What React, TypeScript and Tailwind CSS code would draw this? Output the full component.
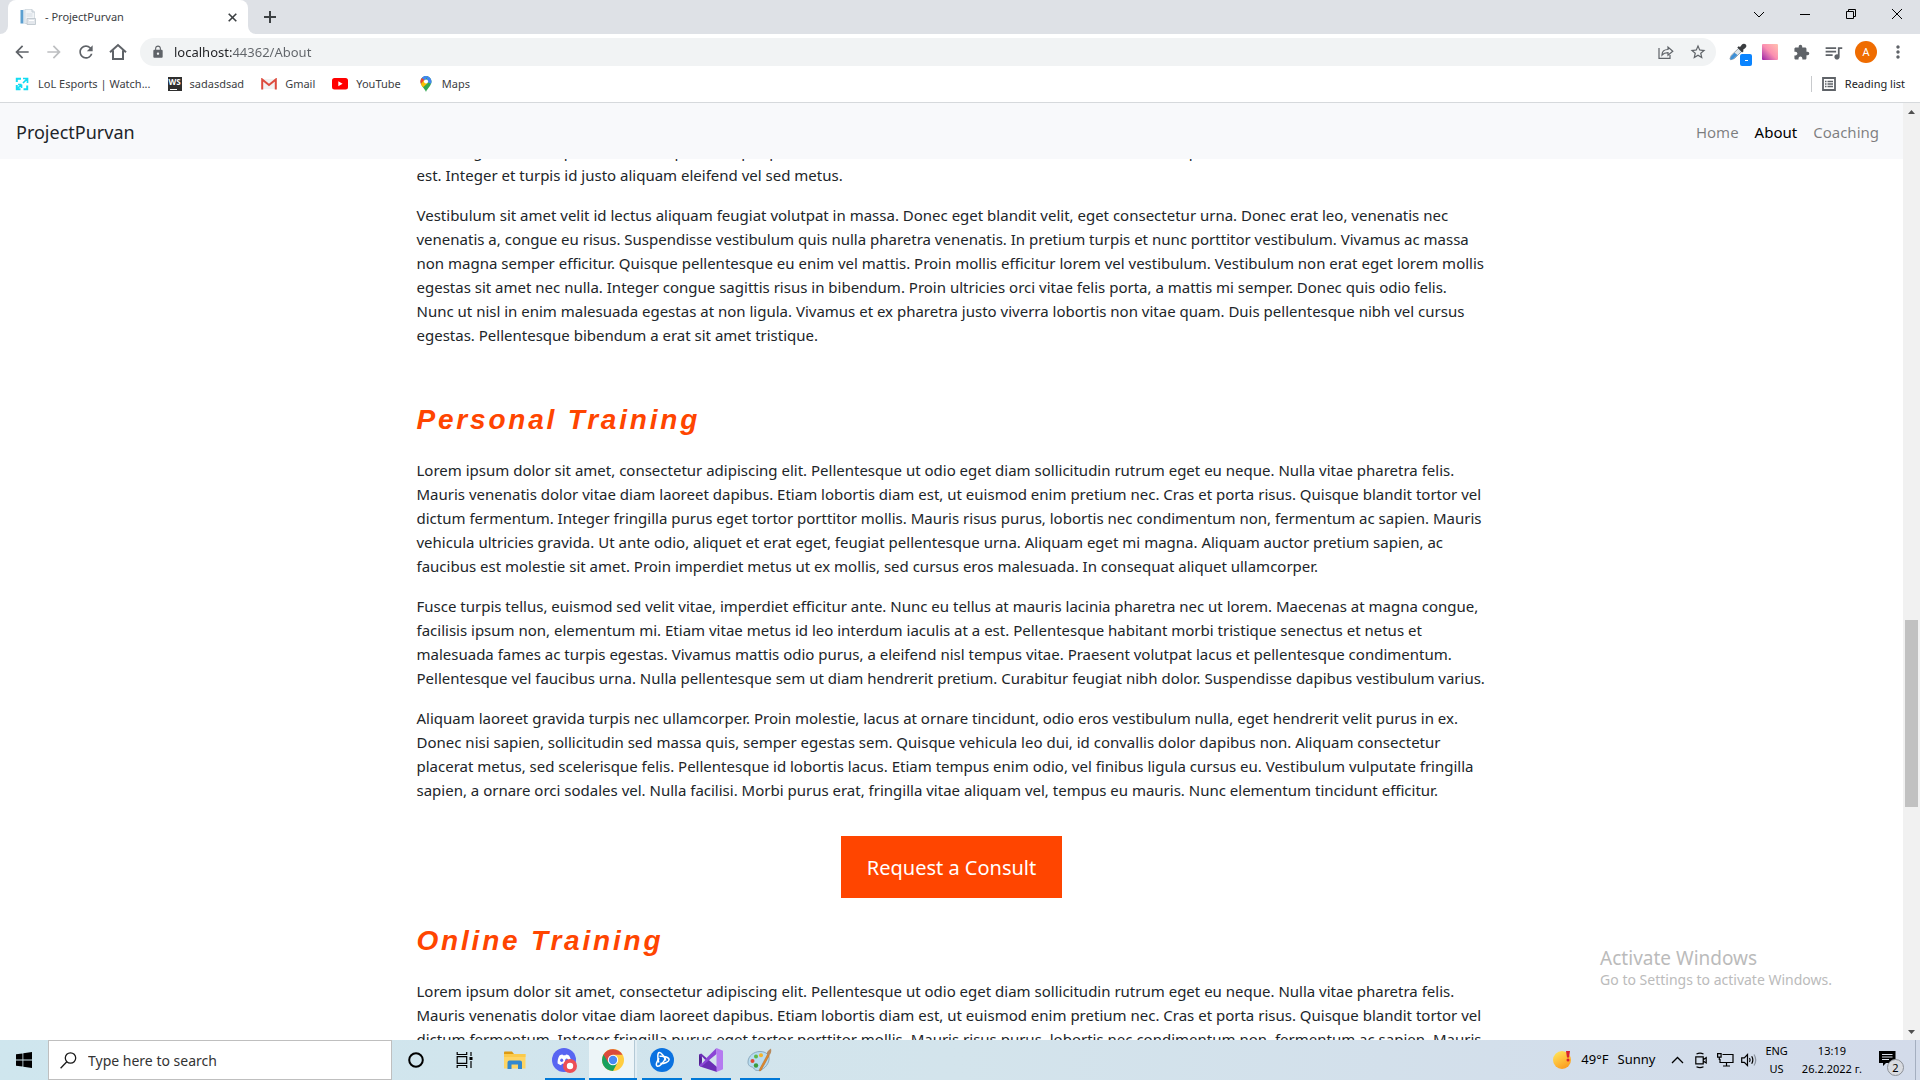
import type { ReactNode } from "react";
import {
  MdArrowBack,
  MdArrowForward,
  MdRefresh,
  MdLock,
  MdExtension,
  MdQueueMusic,
  MdMoreVert,
  MdStarOutline,
} from "react-icons/md";

type Line = string;

const introLines: Line[] = [
  "Sed integer et id tempus at lacus suspendisse per porta vel nisl in enim malesuada at non ante vitae mattis in pretium dolor nunc vitae urna blandit",
  "est. Integer et turpis id justo aliquam eleifend vel sed metus.",
];

const vestibulumLines: Line[] = [
  "Vestibulum sit amet velit id lectus aliquam feugiat volutpat in massa. Donec eget blandit velit, eget consectetur urna. Donec erat leo, venenatis nec",
  "venenatis a, congue eu risus. Suspendisse vestibulum quis nulla pharetra venenatis. In pretium turpis et nunc porttitor vestibulum. Vivamus ac massa",
  "non magna semper efficitur. Quisque pellentesque eu enim vel mattis. Proin mollis efficitur lorem vel vestibulum. Vestibulum non erat eget lorem mollis",
  "egestas sit amet nec nulla. Integer congue sagittis risus in bibendum. Proin ultricies orci vitae felis porta, a mattis mi semper. Donec quis odio felis.",
  "Nunc ut nisl in enim malesuada egestas at non ligula. Vivamus et ex pharetra justo viverra lobortis non vitae quam. Duis pellentesque nibh vel cursus",
  "egestas. Pellentesque bibendum a erat sit amet tristique.",
];

const loremLines: Line[] = [
  "Lorem ipsum dolor sit amet, consectetur adipiscing elit. Pellentesque ut odio eget diam sollicitudin rutrum eget eu neque. Nulla vitae pharetra felis.",
  "Mauris venenatis dolor vitae diam laoreet dapibus. Etiam lobortis diam est, ut euismod enim pretium nec. Cras et porta risus. Quisque blandit tortor vel",
  "dictum fermentum. Integer fringilla purus eget tortor porttitor mollis. Mauris risus purus, lobortis nec condimentum non, fermentum ac sapien. Mauris",
  "vehicula ultricies gravida. Ut ante odio, aliquet et erat eget, feugiat pellentesque urna. Aliquam eget mi magna. Aliquam auctor pretium sapien, ac",
  "faucibus est molestie sit amet. Proin imperdiet metus ut ex mollis, sed cursus eros malesuada. In consequat aliquet ullamcorper.",
];

const fusceLines: Line[] = [
  "Fusce turpis tellus, euismod sed velit vitae, imperdiet efficitur ante. Nunc eu tellus at mauris lacinia pharetra nec ut lorem. Maecenas at magna congue,",
  "facilisis ipsum non, elementum mi. Etiam vitae metus id leo interdum iaculis at a est. Pellentesque habitant morbi tristique senectus et netus et",
  "malesuada fames ac turpis egestas. Vivamus mattis odio purus, a eleifend nisl tempus vitae. Praesent volutpat lacus et pellentesque condimentum.",
  "Pellentesque vel faucibus urna. Nulla pellentesque sem ut diam hendrerit pretium. Curabitur feugiat nibh dolor. Suspendisse dapibus vestibulum varius.",
];

const aliquamLines: Line[] = [
  "Aliquam laoreet gravida turpis nec ullamcorper. Proin molestie, lacus at ornare tincidunt, odio eros vestibulum nulla, eget hendrerit velit purus in ex.",
  "Donec nisi sapien, sollicitudin sed massa quis, semper egestas sem. Quisque vehicula leo dui, id convallis dolor dapibus non. Aliquam consectetur",
  "placerat metus, sed scelerisque felis. Pellentesque id lobortis lacus. Etiam tempus enim odio, vel finibus ligula cursus eu. Vestibulum vulputate fringilla",
  "sapien, a ornare orci sodales vel. Nulla facilisi. Morbi purus erat, fringilla vitae aliquam vel, tempus eu mauris. Nunc elementum tincidunt efficitur.",
];

function Paragraph({ lines }: { lines: Line[] }) {
  return (
    <p className="mb-4 whitespace-nowrap text-[15px] leading-6">
      {lines.map((line) => (
        <span key={line} className="block">
          {line}
        </span>
      ))}
    </p>
  );
}

function SectionTitle({ children }: { children: ReactNode }) {
  return (
    <h3 className="mb-[21px] font-['Liberation_Sans',sans-serif] text-[28px] leading-[34px] font-bold tracking-widest text-[#ff4500] italic">
      {children}
    </h3>
  );
}

function IconButton({
  label,
  className,
  children,
}: {
  label: string;
  className: string;
  children: ReactNode;
}) {
  return (
    <button type="button" aria-label={label} className={`flex shrink-0 items-center justify-center ${className}`}>
      {children}
    </button>
  );
}

function TabStrip() {
  return (
    <div className="flex h-[34px] shrink-0 bg-[#dee1e6]">
      <div className="w-2 bg-white">
        <div className="h-full w-2 rounded-br-lg bg-[#dee1e6]" />
      </div>
      <div className="flex h-[34px] w-60 items-center rounded-t-lg bg-white pr-2 pl-3">
        <svg width="16" height="16" viewBox="0 0 16 16" className="mr-[9px] shrink-0">
          <rect x="0.5" y="1" width="3" height="13.5" fill="#5b9fd0" />
          <rect x="3.5" y="0.5" width="1" height="14.5" fill="#c9dcec" />
          <path d="M5 .5h7l2.500 2.500V14.500H5z" fill="#f1f4f7" stroke="#cdd5dc" strokeWidth=".8" />
          <path d="M12 .5V3h2.500" fill="none" stroke="#b7c2cc" strokeWidth=".8" />
          <path d="M6.500 5h6M6.500 7h6" stroke="#d5dce3" />
          <path d="M7 9.500h8.500V15.500H7z" fill="#e3e7ec" stroke="#b9c1c9" strokeWidth=".8" />
          <path d="M9 11.500h5" stroke="#fff" />
        </svg>
        <span className="flex-1 text-[11px] text-[#3c4043]">- ProjectPurvan</span>
        <IconButton label="Close tab" className="size-4 text-[#3c4043]">
          <svg width="9" height="9" viewBox="0 0 9 9" stroke="currentColor" strokeWidth="1.600">
            <path d="M.7.7l7.600 7.600M8.300.7L.7 8.300" />
          </svg>
        </IconButton>
      </div>
      <div className="w-2 bg-white">
        <div className="h-full w-2 rounded-bl-lg bg-[#dee1e6]" />
      </div>
      <IconButton label="New tab" className="ml-1 w-5 text-[#3c4043]">
        <svg width="12" height="12" viewBox="0 0 12 12" stroke="currentColor" strokeWidth="2">
          <path d="M6 0v12M0 6h12" />
        </svg>
      </IconButton>
      <div className="ml-auto flex h-7 text-black">
        <IconButton label="Search tabs" className="w-[46px]">
          <svg width="12" height="7" viewBox="0 0 12 7" fill="none" stroke="currentColor">
            <path d="M1 1l5 5 5-5" />
          </svg>
        </IconButton>
        <IconButton label="Minimize" className="w-[46px]">
          <svg width="10" height="10" viewBox="0 0 10 10" fill="none" stroke="currentColor">
            <path d="M0 5.500h10" />
          </svg>
        </IconButton>
        <IconButton label="Restore" className="w-[46px]">
          <svg width="10" height="10" viewBox="0 0 10 10" fill="none" stroke="currentColor">
            <path d="M.5 2.500h7v7h-7zM2.500 2.500v-2h7v7h-2" />
          </svg>
        </IconButton>
        <IconButton label="Close window" className="w-[46px]">
          <svg width="10" height="10" viewBox="0 0 10 10" fill="none" stroke="currentColor">
            <path d="M0 0l10 10M10 0L0 10" />
          </svg>
        </IconButton>
      </div>
    </div>
  );
}

function Toolbar() {
  return (
    <div className="flex h-9 shrink-0 items-center bg-white pl-2 text-[#5f6368]">
      <IconButton label="Back" className="w-7">
        <MdArrowBack size={20} />
      </IconButton>
      <IconButton label="Forward" className="ml-1 w-7 text-[#bdbfc1]">
        <MdArrowForward size={20} />
      </IconButton>
      <IconButton label="Reload" className="ml-1 w-7">
        <MdRefresh size={20} />
      </IconButton>
      <IconButton label="Home page" className="ml-1 w-7">
        <svg width="18" height="18" viewBox="0 0 18 18" fill="none" stroke="currentColor" strokeWidth="2">
          <path d="M1 9.300L9 2l8 7.300M4 7.500V16h10V7.500" />
        </svg>
      </IconButton>
      <div className="ml-2 flex h-7 flex-1 items-center rounded-full bg-[#f1f3f4] pr-2 pl-[11px]">
        <MdLock size={14} className="shrink-0" />
        <input
          aria-label="Address bar"
          defaultValue="localhost:44362/About"
          className="ml-[9px] min-w-0 flex-1 bg-linear-to-r from-[#202124] from-[58px] to-[#5f6368] to-[58px] bg-clip-text pt-px text-[13px] text-transparent outline-none"
        />
        <IconButton label="Share this page" className="w-5">
          <svg width="16" height="16" viewBox="0 0 16 16" fill="none" stroke="currentColor" strokeWidth="1.200">
            <path d="M1 4v10.300h11V11" />
            <path d="M4 11c0-4 2.500-5.500 6-5.500V3l4.800 4.200L10 11.300V8.600C7.300 8.600 5.500 9.200 4 11z" />
          </svg>
        </IconButton>
        <IconButton label="Bookmark this page" className="ml-3 w-5">
          <MdStarOutline size={18} />
        </IconButton>
      </div>
      <IconButton label="Color picker" className="relative ml-2 h-7 w-7">
        <svg width="18" height="18" viewBox="0 0 18 18">
          <path d="M10 5l3 3-7.500 7.500-3.800 1.300-.8-.8 1.300-3.600z" fill="#dfe6ea" stroke="#8a9299" strokeWidth=".8" />
          <path d="M5.500 9.800l3 2.300-4 3.600-2.800 1-.6-.6 1.200-3z" fill="#3d8fd6" />
          <path d="M8.300 4.600l1.400-1.300 1.300.6 2-2.400c1-1.200 3.200-1 4 .2s.3 2.500-.7 3.300l-2.200 1.800.4 1.400-1.400 1.300z" fill="#3a3d40" />
        </svg>
        <span className="absolute right-0 bottom-0 flex size-3 items-center justify-center rounded-xs bg-[#0a84ff]">
          <span className="h-px w-[3px] bg-white" />
        </span>
      </IconButton>
      <IconButton label="Gradient extension" className="ml-1 w-7">
        <span className="size-4 rounded-[1px] bg-linear-to-tr from-[#9d12a5] via-[#fb8fb0] to-[#ffc2b0]" />
      </IconButton>
      <IconButton label="Extensions" className="ml-[3px] w-7">
        <MdExtension size={17} />
      </IconButton>
      <IconButton label="Media controls" className="ml-1 w-7">
        <MdQueueMusic size={21} />
      </IconButton>
      <IconButton label="Profile" className="ml-2 size-[22px] rounded-full bg-[#ef6c00] text-[11px] text-white">
        A
      </IconButton>
      <IconButton label="Chrome menu" className="mr-2 ml-[7px] w-7">
        <MdMoreVert size={20} />
      </IconButton>
    </div>
  );
}

function Bookmark({ icon, label }: { icon: ReactNode; label: string }) {
  return (
    <a href="#" className="flex shrink-0 items-center gap-2">
      {icon}
      <span>{label}</span>
    </a>
  );
}

function BookmarksBar() {
  return (
    <div className="flex h-[33px] shrink-0 items-center gap-[17px] border-b border-[#d6d9dc] bg-white pr-[15px] pb-1 pl-[14px] text-[11px] text-[#3c4043]">
      <Bookmark
        label="LoL Esports | Watch..."
        icon={
          <svg width="16" height="16" viewBox="0 0 16 16" fill="none" stroke="#12dcf2">
            <path d="M2.800 6V2.800H7M9.500 13.200H13.200V9.500M2.800 9v4.200H6.500" strokeWidth="2" />
            <path d="M9 7l4.500-4.500M9 2.500h4.500V7M7 9l-3.500 3.500M7.500 8.500H4M7.500 8.500V12" strokeWidth="1.700" />
          </svg>
        }
      />
      <Bookmark
        label="sadasdsad"
        icon={
          <span className="flex size-[14px] flex-col justify-between bg-[#2f2f2f] pb-px pl-px text-white">
            <span className="text-[8px] leading-[9px] font-bold">WS</span>
            <span className="ml-px h-px w-[7px] bg-white" />
          </span>
        }
      />
      <Bookmark
        label="Gmail"
        icon={
          <svg width="16" height="12" viewBox="0 0 16 12">
            <path d="M1 1h14v10H1z" fill="#f2f2f2" />
            <path d="M1.200 11.500V1.500L8 7l6.800-5.500v10" fill="none" stroke="#dd4b3e" strokeWidth="2" />
          </svg>
        }
      />
      <Bookmark
        label="YouTube"
        icon={
          <svg width="16" height="12" viewBox="0 0 16 12">
            <rect width="16" height="11.500" rx="2.500" fill="#f00" />
            <path d="M6.300 3.300v5L10.600 5.800z" fill="#fff" />
          </svg>
        }
      />
      <Bookmark
        label="Maps"
        icon={
          <svg width="16" height="16" viewBox="0 0 16 16">
            <path d="M8 16c-.8-3-5.500-6-5.500-10.500C2.500 2.500 5 0 8 0s5.500 2.500 5.500 5.500C13.500 10 8.800 13 8 16z" fill="#34a853" />
            <path d="M8 0c3 0 5.500 2.500 5.500 5.500 0 .8-.2 1.600-.5 2.300L8 5.500 9.500 0z" fill="#4285f4" />
            <path d="M3.800 2C5 .6 6.500 0 8 0c.6 0 1.300.1 1.900.3L6 5z" fill="#4285f4" />
            <path d="M3.800 1.900L6.500 4 3 8.200C2.200 6.200 2.100 3.900 3.800 1.900z" fill="#ea4335" />
            <path d="M6.300 6.800L9.800 7 5 11.200C4.200 10.200 3.300 9 2.900 7.900L6 4z" fill="#fbbc04" />
            <circle cx="8" cy="5.500" r="2.100" fill="#fff" />
          </svg>
        }
      />
      <button type="button" className="ml-auto flex items-center gap-[9px] text-[#202124]">
        <span className="mr-px h-4 w-px bg-[#c8cacd]" />
        <svg width="14" height="14" viewBox="0 0 14 14" fill="none" stroke="#5f6368">
          <path d="M1 1h12v12H1z" strokeWidth="1.800" />
          <path d="M3 4.500h1.500M3 7h1.500M3 9.500h1.500M5.500 4.500H11M5.500 7H11M5.500 9.500H11" strokeWidth="1.300" />
        </svg>
        Reading list
      </button>
    </div>
  );
}

function SiteNav() {
  return (
    <nav className="relative z-10 flex h-14 shrink-0 items-center bg-[#f8f9fb] pt-px pr-6 pl-4">
      <a href="#" className="text-[18px] leading-7 text-[#212529]">
        ProjectPurvan
      </a>
      <div className="ml-auto flex gap-4 text-[15px] leading-6">
        <a href="#" className="text-black/50">
          Home
        </a>
        <a href="#" className="text-black">
          About
        </a>
        <a href="#" className="text-black/50">
          Coaching
        </a>
      </div>
    </nav>
  );
}

function Scrollbar() {
  return (
    <div className="flex w-[17px] shrink-0 flex-col bg-[#f1f1f1] px-[2px]">
      <IconButton label="Scroll up" className="h-[17px] text-[#505050]">
        <svg width="7" height="4" viewBox="0 0 7 4" fill="currentColor">
          <path d="M3.500 0L7 4H0z" />
        </svg>
      </IconButton>
      <div className="flex-[500]" />
      <div className="flex-[187] bg-[#c1c1c1]" />
      <div className="flex-[216]" />
      <IconButton label="Scroll down" className="h-[17px] text-[#505050]">
        <svg width="7" height="4" viewBox="0 0 7 4" fill="currentColor">
          <path d="M3.500 4L0 0h7z" />
        </svg>
      </IconButton>
    </div>
  );
}

function Page() {
  return (
    <div className="relative flex min-h-0 flex-1">
      <div className="flex min-w-0 flex-1 flex-col overflow-hidden bg-white">
        <SiteNav />
        <main className="min-h-0 flex-1">
          <article className="mx-auto -mt-5 max-w-[1070px] text-[#212529]">
            <Paragraph lines={introLines} />
            <Paragraph lines={vestibulumLines} />
            <section className="pt-10">
              <SectionTitle>Personal Training</SectionTitle>
              <Paragraph lines={loremLines} />
              <Paragraph lines={fusceLines} />
              <Paragraph lines={aliquamLines} />
              <div className="flex justify-center pt-[18px] pb-[26px]">
                <button type="button" className="bg-[#ff4500] px-[26px] pt-[17px] pb-[15px] text-[20px] leading-[30px] text-white">
                  Request a Consult
                </button>
              </div>
            </section>
            <section>
              <SectionTitle>Online Training</SectionTitle>
              <Paragraph lines={loremLines.slice(0, 3)} />
            </section>
          </article>
        </main>
      </div>
      <Scrollbar />
      <aside className="pointer-events-none absolute right-[88px] bottom-[50px] z-20 text-[#bbb]">
        <p className="text-[19px] leading-6">Activate Windows</p>
        <p className="text-[14px] leading-5">Go to Settings to activate Windows.</p>
      </aside>
    </div>
  );
}

function TaskbarApp({ label, running, children }: { label: string; running?: boolean; children: ReactNode }) {
  return (
    <button type="button" aria-label={label} className="flex w-[49px] flex-col items-center">
      <span className="flex flex-1 items-center">{children}</span>
      {running && <span className="-mt-[2px] h-[2px] w-10 bg-[#0078d7]" />}
    </button>
  );
}

function Taskbar() {
  return (
    <footer className="flex h-10 shrink-0 bg-linear-to-r from-[#cfe6ee] via-[#d3e4ec] to-[#d3dbea] text-black">
      <IconButton label="Start" className="w-12">
        <svg width="16" height="16" viewBox="0 0 16 16">
          <path d="M0 2.300L6.500 1.400v6.200H0zM7.300 1.300L16 0v7.600H7.300zM0 8.400h6.500v6.200L0 13.700zM7.300 8.400H16V16l-8.700-1.300z" />
        </svg>
      </IconButton>
      <label className="flex w-[344px] items-center border border-[#bfbfbf] bg-white pl-[11px]">
        <svg width="17" height="17" viewBox="0 0 17 17" fill="none" stroke="#1a1a1a" strokeWidth="1.300">
          <circle cx="10.500" cy="6" r="5.200" />
          <path d="M6.800 9.800L.6 16.200" />
        </svg>
        <input
          aria-label="Search"
          placeholder="Type here to search"
          className="ml-[11px] min-w-0 flex-1 text-[14px] outline-none placeholder:text-[#333]"
        />
      </label>
      <IconButton label="Cortana" className="w-12">
        <svg width="16" height="16" viewBox="0 0 16 16" fill="none" stroke="#000" strokeWidth="2">
          <circle cx="8" cy="8" r="6.800" />
        </svg>
      </IconButton>
      <IconButton label="Task view" className="w-[49px]">
        <svg width="17" height="16" viewBox="0 0 17 16" fill="none" stroke="#000" strokeWidth="1.200">
          <path d="M1.200 0v2.500h9.500V0M1.200 16v-2.500h9.500V16M1.200 4.600h9.500v6.800H1.200zM15 0v4M15 9v7" />
          <path d="M13.500 5h3v3h-3z" fill="#000" stroke="none" />
        </svg>
      </IconButton>
      <div className="ml-px flex">
        <TaskbarApp label="File Explorer">
          <svg width="22" height="19" viewBox="0 0 22 19">
            <path d="M0 1.200Q0 .5.800.5H8l2 2.500H0z" fill="#dd9a12" />
            <path d="M0 3h21.500v14.500H0z" fill="#ffd564" />
            <path d="M0 3h21.500v3H0z" fill="#fbca4b" />
            <path d="M3.500 18V11.500Q3.500 9.500 5.500 9.500h10.500q2 0 2 2V18h-4v-4.500H7.500V18z" fill="#3288d0" />
          </svg>
        </TaskbarApp>
      </div>
      <div className="ml-px flex">
        <TaskbarApp label="Discord" running>
          <svg width="25" height="25" viewBox="0 0 25 25">
            <circle cx="12" cy="12" r="12" fill="#5865f2" />
            <path d="M7.500 7.500c1-.7 2-1 3-1.100l.5.900h2.500l.5-.9c1 .1 2.100.4 3 1.100 1.500 2.300 2.400 5 2.200 8-1.200.9-2.300 1.400-3.500 1.700l-.9-1.400H10l-.9 1.400c-1.200-.3-2.400-.9-3.500-1.700-.2-3 .5-5.600 1.900-8z" fill="#fff" />
            <ellipse cx="9.700" cy="12.300" rx="1.500" ry="1.700" fill="#5865f2" />
            <ellipse cx="14.700" cy="12.300" rx="1.500" ry="1.700" fill="#5865f2" />
            <circle cx="18" cy="18" r="7" fill="#ed4f55" />
            <circle cx="18" cy="18" r="3.200" fill="#fff" />
          </svg>
        </TaskbarApp>
      </div>
      <button type="button" aria-label="Google Chrome" className="flex w-12 border-b-2 border-[#0078d7]">
        <span className="flex h-full w-[45px] items-center justify-center bg-[#edf5f8] pt-[2px] pl-[2px]">
          <svg width="22" height="22" viewBox="0 0 22 22">
            <circle cx="11" cy="11" r="11" fill="#ffcd40" />
            <path d="M11 11L1.500 5.500A11 11 0 0 0 11 22L15.500 13.500z" fill="#18a05e" />
            <path d="M1.500 5.500A11 11 0 0 1 20.500 5.800H11L6.200 13.500z" fill="#da4b3c" />
            <circle cx="11" cy="11" r="5.200" fill="#fff" />
            <circle cx="11" cy="11" r="4.200" fill="#4a8af4" />
          </svg>
        </span>
        <span className="h-full w-px bg-[#b3c9d6]" />
        <span className="h-full flex-1 bg-[#e2eef4]" />
      </button>
      <TaskbarApp label="Battle.net" running>
        <svg width="24" height="24" viewBox="0 0 24 24" fill="none" stroke="#fff" strokeWidth="1.500">
          <circle cx="12" cy="12" r="12" fill="#0b72e0" stroke="none" />
          <path d="M8.800 14.500C7.200 9.500 7.600 4.800 9.300 4.600c2-.2 5 3.800 6.600 7.900" />
          <path d="M9.500 8.300c5-.6 9.800 1.400 9.600 3.500-.2 2-4.300 3.800-8.800 3.800" />
          <path d="M15.800 9.500c-2 4.800-6.300 9.500-8.500 8.700-1.900-.8-.8-4.500 1.800-8" />
        </svg>
      </TaskbarApp>
      <TaskbarApp label="Visual Studio" running>
        <svg width="24" height="24" viewBox="0 0 24 24">
          <path d="M0 6.500L2.200 5.500 18 19v5L1.800 18.800 0 17.500z" fill="#6a2db5" />
          <path d="M0 17.500V6.500l3.500 5.500z" fill="#52218f" />
          <path d="M2.200 18.800L0 17.500 17.500 0v6z" fill="#8b45d6" />
          <path d="M3 8.500v7L6.300 12z" fill="#d3e4ec" />
          <path d="M17.500 7v10L11 12z" fill="#d3e4ec" />
          <path d="M17.500 0L24 2.800v18.400L17.500 24z" fill="#b57af0" />
        </svg>
      </TaskbarApp>
      <TaskbarApp label="Paint" running>
        <svg width="25" height="24" viewBox="0 0 25 24">
          <path d="M1 14C1 8 7 3.500 13 3.500S23 7 22 12s-5.500 10.500-11.500 10.500c-3.500 0-3-2.500-5-3.300S1 18 1 14z" fill="#b8dcf0" stroke="#7c9bb0" strokeWidth=".8" />
          <circle cx="5.500" cy="13" r="2" fill="#e34b35" />
          <circle cx="9" cy="8.500" r="2" fill="#5cb84a" />
          <circle cx="14" cy="7.300" r="2" fill="#f5b32b" />
          <circle cx="9" cy="17.500" r="2.200" fill="#3a9c3e" />
          <path d="M20.500 6.500l1.800 1L14 22.500l-1.500.5.200-2z" fill="#e08a2e" stroke="#b5641a" strokeWidth=".5" />
          <path d="M20 6.500c-.5-3 1.500-4 4-6 .8 3-.1 5.500-2 7z" fill="#b98a5e" />
        </svg>
      </TaskbarApp>
      <div className="ml-auto flex items-center">
        <button type="button" className="flex items-center text-[13px]">
          <svg width="20" height="20" viewBox="0 0 20 20" className="mr-[9px]">
            <defs>
              <linearGradient id="sun" x1="0.200" y1="0.100" x2="0.700" y2="1">
                <stop offset="0" stopColor="#ffdf55" />
                <stop offset="1" stopColor="#fb9a1e" />
              </linearGradient>
            </defs>
            <circle cx="10" cy="10" r="9" fill="url(#sun)" />
            <path d="M14 1h4l-1 6.500h-2z" fill="#d8232f" />
            <circle cx="16" cy="10" r="1.500" fill="#d8232f" />
          </svg>
          <span className="mr-[9px]">49°F</span>
          <span>Sunny</span>
        </button>
        <IconButton label="Show hidden icons" className="ml-[10px] w-6">
          <svg width="13" height="8" viewBox="0 0 13 8" fill="none" stroke="#000" strokeWidth="1.300">
            <path d="M1 7l5.500-5.500L12 7" />
          </svg>
        </IconButton>
        <IconButton label="Meet now" className="w-6">
          <svg width="12" height="17" viewBox="0 0 12 17" fill="none" stroke="#000" strokeWidth="1.200">
            <path d="M.8 4.800h7.400v7H.8zM8.500 7.500l2.700-1.800v5.200L8.500 9.200M1.500 2Q5 .2 8.500 2M1.500 14.800q3.500 1.800 7 0" />
          </svg>
        </IconButton>
        <IconButton label="Network" className="w-6">
          <svg width="17" height="14" viewBox="0 0 17 14" fill="none" stroke="#000" strokeWidth="1.200">
            <path d="M5.500 1.500h10.500v8H3V6M9.500 9.500v3.500M6 13h7" />
            <path d="M.6.6h3.500v3.500H.6zM2.300 4.100v3" />
          </svg>
        </IconButton>
        <IconButton label="Volume" className="w-6">
          <svg width="16" height="14" viewBox="0 0 16 14" fill="none" stroke="#000" strokeWidth="1.200">
            <path d="M.7 4.800h2.600L6.500 1.500v11L3.300 9.300H.7z" />
            <path d="M8.500 5Q9.800 7 8.500 9M10.700 3.300q2.300 3.700 0 7.400" />
            <path d="M13 1.500q3.500 5.500 0 11" stroke="#8a929e" />
          </svg>
        </IconButton>
        <button type="button" className="ml-1 text-center text-[11px] leading-[18px]">
          <span className="block">ENG</span>
          <span className="block">US</span>
        </button>
        <button type="button" className="ml-[14px] text-center text-[11px] leading-[18px]">
          <span className="block">13:19</span>
          <span className="block">26.2.2022 г.</span>
        </button>
        <IconButton label="Notifications" className="relative ml-[11px] h-10 w-[42px] pr-[14px]">
          <svg width="17" height="16" viewBox="0 0 17 16" className="-mt-[2px]">
            <path d="M0 0h16.500v12H7l-3 3v-3H0z" />
            <path d="M3 3.500h10.500M3 6h10.500M3 8.500h7" stroke="#dbe1ec" strokeWidth="1.100" />
          </svg>
          <span className="absolute right-[11px] bottom-1 flex size-[17px] items-center justify-center rounded-full border border-[#8b8f96] bg-[#d9dbe0] text-[11px] leading-none">
            2
          </span>
        </IconButton>
        <span className="mr-1 h-10 w-px bg-[#a5afc0]" />
      </div>
    </footer>
  );
}

export default function App() {
  return (
    <div className="flex h-screen flex-col overflow-hidden bg-white font-['Noto_Sans','Open_Sans',sans-serif]">
      <TabStrip />
      <Toolbar />
      <BookmarksBar />
      <Page />
      <Taskbar />
    </div>
  );
}
